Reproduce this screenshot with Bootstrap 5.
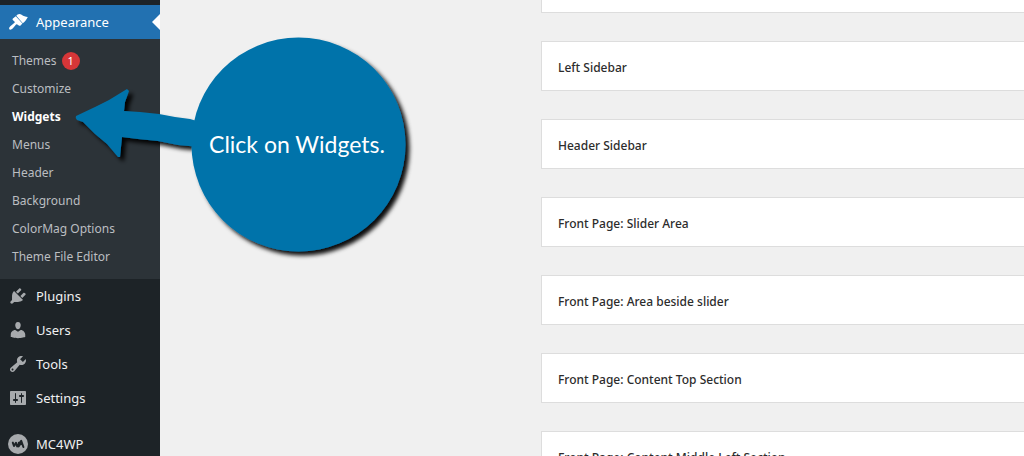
<!DOCTYPE html>
<html lang="en">
<head>
<meta charset="utf-8">
<meta name="viewport" content="width=device-width, initial-scale=1">
<title>Widgets</title>
<link rel="stylesheet" href="https://cdn.jsdelivr.net/npm/bootstrap@5.3.0/dist/css/bootstrap.min.css">
<style>
  body { font-family: "Noto Sans", "Open Sans", sans-serif; font-size: 12px; background: #f0f0f0; color: #1e1e1e; }
  .admin-menu { width: 160px; background: #1d2327; padding-top: 5px; }
  .admin-menu a { text-decoration: none; }
  .menu-top { height: 34px; padding-left: 8px; gap: 8px; color: #f0f0f1; font-size: 13px; line-height: 20px; }
  .menu-top svg { width: 20px; height: 20px; fill: #a7aaad; flex: none; }
  .menu-top.current { background: #2271b1; color: #fff; }
  .menu-top.current svg { fill: #fff; }
  .menu-top.current::after { content: ""; position: absolute; right: 0; top: 9px; border: 8px solid transparent; border-left: 0; border-right-color: #fff; }
  .menu-gap { margin-top: 12px; }
  .submenu { background: #2c3338; padding: 8px 0; }
  .submenu a { height: 28px; padding-left: 12px; gap: 5px; color: #bbbec1; line-height: 18px; }
  .submenu a.current { color: #fff; font-weight: 700; }
  .count { width: 18px; height: 18px; background: #d63638; color: #fff; font-size: 11px; }
  .areas { padding-left: 21px; }
  .area-box { height: 50px; padding: 0 16px; margin-bottom: 28px; background: #fff; border: 1px solid #ddd; border-right: 0; }
  .area-box h2 { font-size: 12px; line-height: 20px; font-weight: 500; padding-top: 3px; color: #2c2c2c; }
  .area-tail { height: 13px; border-top: 0; }
  .callout { left: 60px; top: 25px; width: 360px; height: 240px; }
  .callout p { left: 130px; top: 12px; width: 214px; height: 214px; color: #fff; font-family: Lato, "Noto Sans", sans-serif; font-size: 23px; }
</style>
</head>
<body>
<div class="d-flex vh-100 overflow-hidden position-relative">
  <nav class="admin-menu flex-shrink-0" aria-label="Main menu">
    <a href="#" class="menu-top current d-flex align-items-center position-relative">
      <svg viewBox="0 0 20 20" aria-hidden="true"><path d="M8.300 3.800L9.600 2.600C11 1.600 12.400 2 13.600 2.800C15.600 4.200 17.400 4.700 19.800 5C18.600 7.600 17 9.600 14.800 11.200ZM7.800 4.200L14.400 11.600L12.600 13.400C12 13.900 11.400 13.900 10.800 13.500L9.300 12.400C8.700 12 8.200 12.200 7.800 12.700C6.600 14.400 5 16.200 3.600 17.300C2.600 18 1.500 17.900 1.200 17C.9 16 1.400 15 2.300 14.200L6.500 10.800C6.900 10.400 6.900 9.900 6.500 9.500L5 8.200C4.400 7.600 4.400 7 4.900 6.500Z"/></svg>
      Appearance
    </a>
    <div class="submenu">
      <a href="#" class="d-flex align-items-center">Themes <span class="count rounded-circle d-flex align-items-center justify-content-center">1</span></a>
      <a href="#" class="d-flex align-items-center">Customize</a>
      <a href="#" class="current d-flex align-items-center">Widgets</a>
      <a href="#" class="d-flex align-items-center">Menus</a>
      <a href="#" class="d-flex align-items-center">Header</a>
      <a href="#" class="d-flex align-items-center">Background</a>
      <a href="#" class="d-flex align-items-center">ColorMag Options</a>
      <a href="#" class="d-flex align-items-center">Theme File Editor</a>
    </div>
    <a href="#" class="menu-top d-flex align-items-center">
      <svg viewBox="0 0 20 20" aria-hidden="true"><path d="M13.11 4.36L9.87 7.6 8 5.73l3.24-3.24c.35-.34 1.05-.2 1.56.32.52.51.66 1.21.31 1.55zm-8 1.77l.91-1.12 9.01 9.01-1.19.84c-.71.71-2.63 1.16-3.82 1.16H6.14L4.9 17.26c-.59.59-1.54.59-2.12 0-.59-.58-.59-1.53 0-2.12l1.24-1.24v-3.88c0-1.13.4-3.19 1.09-3.89zm7.26 3.97l3.24-3.24c.34-.35 1.04-.21 1.55.31.52.51.66 1.21.31 1.55l-3.24 3.25z"/></svg>
      Plugins
    </a>
    <a href="#" class="menu-top d-flex align-items-center">
      <svg viewBox="0 0 20 20" aria-hidden="true"><path d="M10 9.25c-2.27 0-2.73-3.44-2.73-3.44C7 4.02 7.82 2 9.97 2c2.16 0 2.98 2.02 2.71 3.81 0 0-.41 3.44-2.68 3.44zm0 2.57L12.72 10c2.39 0 4.52 2.33 4.52 4.53v2.49s-3.65 1.13-7.24 1.13c-3.65 0-7.24-1.13-7.24-1.13v-2.49c0-2.25 1.94-4.48 4.47-4.48z"/></svg>
      Users
    </a>
    <a href="#" class="menu-top d-flex align-items-center">
      <svg viewBox="0 0 20 20" aria-hidden="true"><path d="M16.68 9.77c-1.34 1.34-3.3 1.67-4.95.99l-5.41 6.52c-.99.99-2.59.99-3.58 0s-.99-2.59 0-3.57l6.52-5.42c-.68-1.65-.35-3.61.99-4.95 1.28-1.28 3.12-1.62 4.72-1.06l-2.89 2.89 2.82 2.82 2.86-2.87c.53 1.58.18 3.39-1.08 4.65zM3.81 16.21c.4.39 1.04.39 1.43 0 .4-.4.4-1.04 0-1.43-.39-.4-1.03-.4-1.43 0-.39.39-.39 1.03 0 1.43z"/></svg>
      Tools
    </a>
    <a href="#" class="menu-top d-flex align-items-center">
      <svg viewBox="0 0 20 20" aria-hidden="true"><path d="M18 16V4c0-.55-.45-1-1-1H3c-.55 0-1 .45-1 1v12c0 .55.45 1 1 1h14c.55 0 1-.45 1-1zM8 11h1c.55 0 1 .45 1 1s-.45 1-1 1H8v1.5c0 .28-.22.5-.5.5s-.5-.22-.5-.5V13H6c-.55 0-1-.45-1-1s.45-1 1-1h1V5.5c0-.28.22-.5.5-.5s.5.22.5.5V11zm5-2h-1c-.55 0-1-.45-1-1s.45-1 1-1h1V5.5c0-.28.22-.5.5-.5s.5.22.5.5V7h1c.55 0 1 .45 1 1s-.45 1-1 1h-1v5.5c0 .28-.22.5-.5.5s-.5-.22-.5-.5V9z"/></svg>
      Settings
    </a>
    <a href="#" class="menu-top menu-gap d-flex align-items-center">
      <svg viewBox="0 0 20 20" aria-hidden="true"><circle cx="10" cy="10" r="10"/><path d="M4.800 8.600L6 12L8 8.800L9.200 12.400L13.200 6.800L15.400 13M10.800 8.800L10.600 12.400L13 9" fill="none" stroke="#1d2327" stroke-width="2" stroke-linejoin="round" stroke-linecap="round"/></svg>
      MC4WP
    </a>
  </nav>

  <main class="flex-grow-1">
    <div class="row g-0">
      <div class="col-7 offset-5 areas">
        <section class="area-box area-tail" aria-label="Widget area"></section>
        <section class="area-box d-flex align-items-center"><h2 class="m-0">Left Sidebar</h2></section>
        <section class="area-box d-flex align-items-center"><h2 class="m-0">Header Sidebar</h2></section>
        <section class="area-box d-flex align-items-center"><h2 class="m-0">Front Page: Slider Area</h2></section>
        <section class="area-box d-flex align-items-center"><h2 class="m-0">Front Page: Area beside slider</h2></section>
        <section class="area-box d-flex align-items-center"><h2 class="m-0">Front Page: Content Top Section</h2></section>
        <section class="area-box d-flex align-items-center"><h2 class="m-0">Front Page: Content Middle Left Section</h2></section>
      </div>
    </div>
  </main>

  <div class="callout position-absolute">
    <svg class="d-block w-100 h-100" viewBox="0 0 360 240" aria-hidden="true">
      <defs>
        <filter id="drop" x="-5%" y="-5%" width="115%" height="115%">
          <feDropShadow dx="4" dy="4" stdDeviation="2" flood-color="#000" flood-opacity=".95"/>
        </filter>
      </defs>
      <g fill="#0073aa" filter="url(#drop)">
        <circle cx="238.500" cy="119.500" r="107"/>
        <path d="M16 91Q15 93 17 95L23 97L35 109L47 119L58 132L60 132L61 122L62 112L78 114L98 116L118 120L140 122V97L130 94L115 92L99 89L80 87L64 86L65 77L69 66L67 64L49 75L35 82Z"/>
      </g>
    </svg>
    <p class="position-absolute m-0 d-flex align-items-center justify-content-center text-nowrap">Click on Widgets.</p>
  </div>
</div>
<script src="https://cdn.jsdelivr.net/npm/bootstrap@5.3.0/dist/js/bootstrap.bundle.min.js"></script>
</body>
</html>
